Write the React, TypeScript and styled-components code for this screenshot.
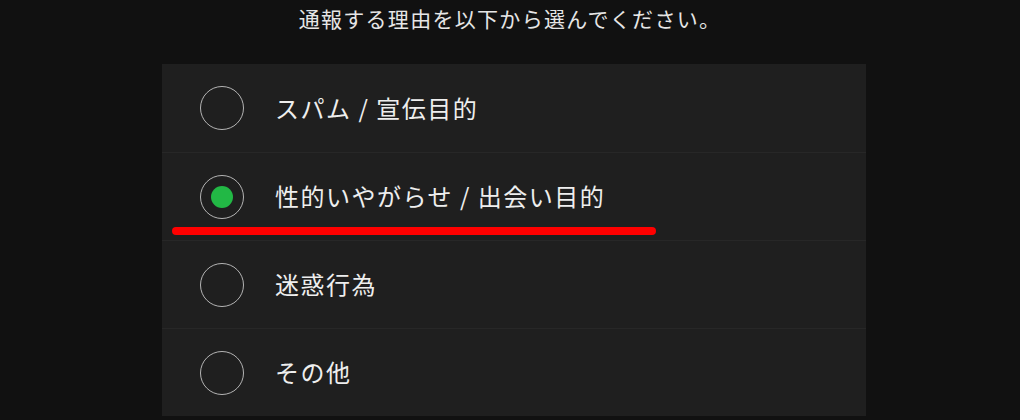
import { createGlobalStyle } from 'styled-components';
import styled from 'styled-components';

const GlobalStyle = createGlobalStyle`
  html, body {
    margin: 0;
    padding: 0;
    background: #111111;
  }
  body {
    font-family: "Noto Sans CJK JP", "Noto Sans", sans-serif;
  }
`;

const Page = styled.div`
  width: 1020px;
  height: 420px;
  background: #111111;
  overflow: hidden;
`;

const Title = styled.h1`
  margin: 0;
  height: 64px;
  display: flex;
  align-items: flex-start;
  justify-content: center;
  padding-top: 3px;
  box-sizing: border-box;
  font-size: 21px;
  font-weight: 400;
  letter-spacing: 1.3px;
  color: #e6e6e6;
`;

const List = styled.ul`
  list-style: none;
  margin: 0 0 0 162px;
  padding: 0;
  width: 704px;
  background: #1f1f1f;
`;

const Row = styled.li`
  position: relative;
  height: 88px;
  display: flex;
  align-items: center;
  gap: 31px;
  padding-left: 38px;
  box-sizing: border-box;
  border-top: 1px solid #272727;

  &:first-child {
    border-top: none;
  }
`;

const Radio = styled.span<{ $checked?: boolean }>`
  width: 44px;
  height: 44px;
  border-radius: 50%;
  border: 1.5px solid #b4b4b4;
  box-sizing: border-box;
  display: flex;
  align-items: center;
  justify-content: center;
  flex-shrink: 0;

  &::after {
    content: '';
    display: ${p => (p.$checked ? 'block' : 'none')};
    width: 22px;
    height: 22px;
    border-radius: 50%;
    background: #22b845;
  }
`;

const Label = styled.span`
  font-size: 24px;
  color: #eeeeee;
  letter-spacing: 1.5px;
  margin-top: -2px;
`;

const Underline = styled.span`
  position: absolute;
  left: 10px;
  top: 74px;
  width: 484px;
  height: 8px;
  border-radius: 4px;
  background: #ff0000;
`;

const reasons = [
  'スパム / 宣伝目的',
  '性的いやがらせ / 出会い目的',
  '迷惑行為',
  'その他',
];

export default function App() {
  return (
    <Page>
      <GlobalStyle />
      <Title>通報する理由を以下から選んでください。</Title>
      <List>
        {reasons.map((r, i) => (
          <Row key={r}>
            <Radio $checked={i === 1} />
            <Label>{r}</Label>
            {i === 1 && <Underline />}
          </Row>
        ))}
      </List>
    </Page>
  );
}
